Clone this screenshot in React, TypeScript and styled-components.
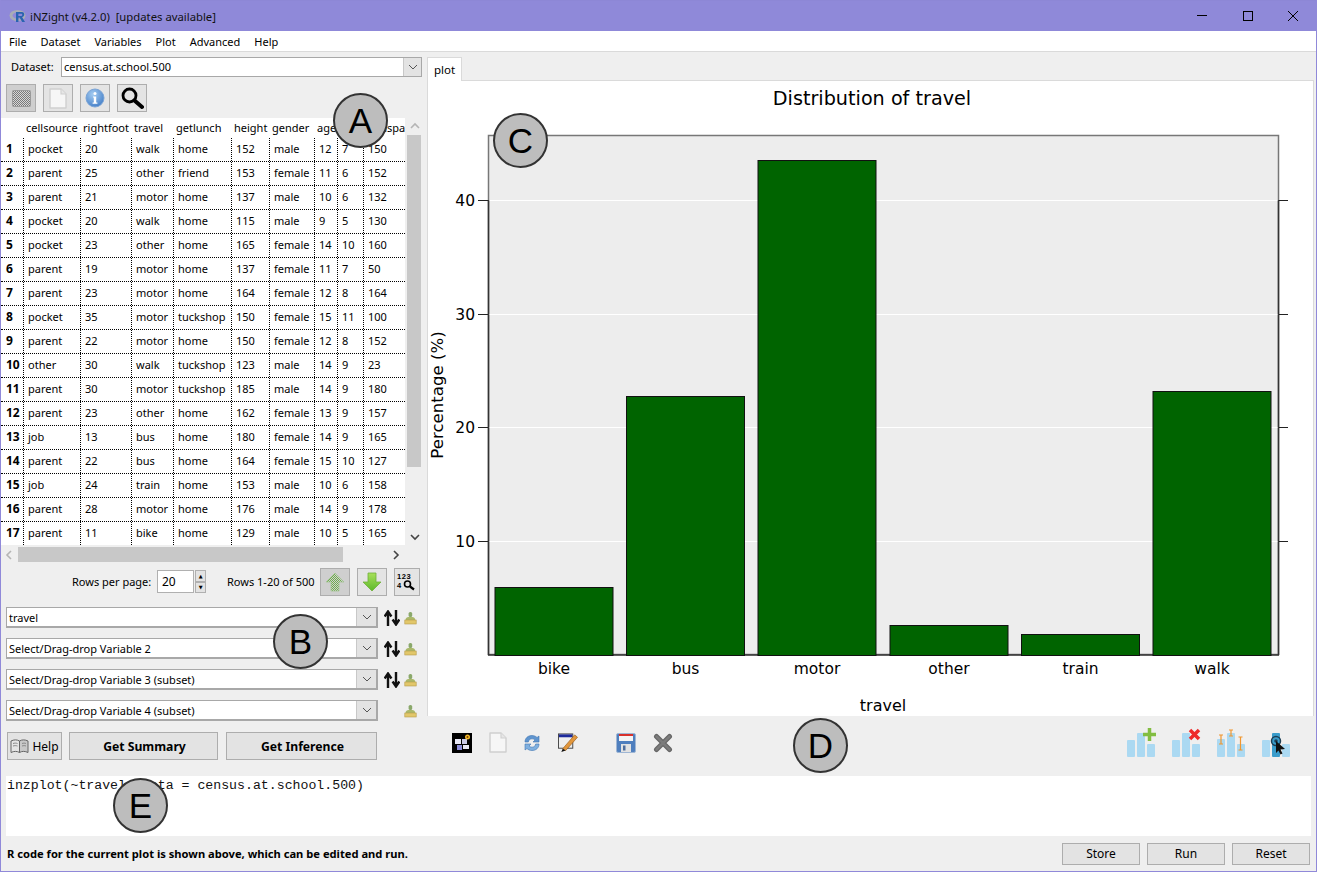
import React from 'react'
import styled, { createGlobalStyle } from 'styled-components'

const UI_FONT = `'Noto Sans', 'DejaVu Sans', sans-serif`

const GlobalStyle = createGlobalStyle`
    html, body {
        margin: 0;
        padding: 0;
        background: #efefef;
        overflow: hidden;
    }
    * {
        box-sizing: border-box;
    }
`

const COLUMNS = ['cellsource', 'rightfoot', 'travel', 'getlunch', 'height', 'gender', 'age', 'year', 'armspan']

const ROWS = [
    ['pocket', '20', 'walk', 'home', '152', 'male', '12', '7', '150'],
    ['parent', '25', 'other', 'friend', '153', 'female', '11', '6', '152'],
    ['parent', '21', 'motor', 'home', '137', 'male', '10', '6', '132'],
    ['pocket', '20', 'walk', 'home', '115', 'male', '9', '5', '130'],
    ['pocket', '23', 'other', 'home', '165', 'female', '14', '10', '160'],
    ['parent', '19', 'motor', 'home', '137', 'female', '11', '7', '50'],
    ['parent', '23', 'motor', 'home', '164', 'female', '12', '8', '164'],
    ['pocket', '35', 'motor', 'tuckshop', '150', 'female', '15', '11', '100'],
    ['parent', '22', 'motor', 'home', '150', 'female', '12', '8', '152'],
    ['other', '30', 'walk', 'tuckshop', '123', 'male', '14', '9', '23'],
    ['parent', '30', 'motor', 'tuckshop', '185', 'male', '14', '9', '180'],
    ['parent', '23', 'other', 'home', '162', 'female', '13', '9', '157'],
    ['job', '13', 'bus', 'home', '180', 'female', '14', '9', '165'],
    ['parent', '22', 'bus', 'home', '164', 'female', '15', '10', '127'],
    ['job', '24', 'train', 'home', '153', 'male', '10', '6', '158'],
    ['parent', '28', 'motor', 'home', '176', 'male', '14', '9', '178'],
    ['parent', '11', 'bike', 'home', '129', 'male', '10', '5', '165'],
]

const BARS = [
    { label: 'bike', x: 495, top: 587 },
    { label: 'bus', x: 626.5, top: 396 },
    { label: 'motor', x: 758, top: 160 },
    { label: 'other', x: 890, top: 625 },
    { label: 'train', x: 1021.5, top: 634 },
    { label: 'walk', x: 1153, top: 391 },
]

const TICKS = [
    { label: '40', y: 200 },
    { label: '30', y: 314 },
    { label: '20', y: 427 },
    { label: '10', y: 541 },
]

function Chevron({ dir }: { dir: 'up' | 'down' | 'left' | 'right' }): JSX.Element {
    const points = {
        up: '1,6 5,2 9,6',
        down: '1,3 5,7 9,3',
        left: '6,1 2,5 6,9',
        right: '3,1 7,5 3,9',
    }[dir]
    return (
        <svg width="10" height="10" viewBox="0 0 10 10">
            <polyline points={points} fill="none" stroke="currentColor" strokeWidth="1.6" />
        </svg>
    )
}

function DropArrow(): JSX.Element {
    return (
        <svg width="10" height="6" viewBox="0 0 10 6">
            <polyline points="1,1 5,5 9,1" fill="none" stroke="#555" strokeWidth="1" />
        </svg>
    )
}

function RLogo(): JSX.Element {
    return (
        <svg width="18" height="14" viewBox="0 0 18 14">
            <ellipse cx="8.5" cy="6.5" rx="8" ry="5.5" fill="#a9adb5" />
            <ellipse cx="9" cy="6.5" rx="5.5" ry="3.2" fill="#8f89d9" />
            <path d="M7 13V3h6c3 0 3 4.6 0 5l3 5h-2.8L10.6 8.5H9.4V13zM9.4 4.8v2.1h3c1.2 0 1.2-2.1 0-2.1z" fill="#2a64b0" />
        </svg>
    )
}

function SheetIcon(): JSX.Element {
    return (
        <svg width="18" height="21" viewBox="0 0 18 21">
            <path d="M1 1h11l5 5v14H1z" fill="#f6f6f6" stroke="#cfcfcf" strokeWidth="1.4" strokeLinejoin="round" />
            <path d="M12 1v5h5" fill="#e6e6e6" stroke="#cfcfcf" strokeWidth="1.1" />
        </svg>
    )
}

function CheckerIcon(): JSX.Element {
    return (
        <svg width="19" height="17" viewBox="0 0 19 17">
            <defs>
                <pattern id="chk" width="2" height="2" patternUnits="userSpaceOnUse">
                    <rect width="2" height="2" fill="#d6d6d6" />
                    <rect width="1" height="1" fill="#7a7a7a" />
                    <rect x="1" y="1" width="1" height="1" fill="#7a7a7a" />
                </pattern>
            </defs>
            <rect x="0.5" y="0.5" width="18" height="16" rx="1" fill="url(#chk)" stroke="#9a9a9a" />
        </svg>
    )
}

function InfoIcon(): JSX.Element {
    return (
        <svg width="20" height="20" viewBox="0 0 20 20">
            <defs>
                <radialGradient id="infoBlue" cx="0.4" cy="0.3" r="0.8">
                    <stop offset="0" stopColor="#a5cdf2" />
                    <stop offset="1" stopColor="#3c78c4" />
                </radialGradient>
            </defs>
            <circle cx="10" cy="10" r="9" fill="url(#infoBlue)" stroke="#7ba4d6" />
            <circle cx="10" cy="5.6" r="1.5" fill="#fff" />
            <path d="M8 8.4h3.2v6.2h1.2v1.2H7.6v-1.2h1.2v-5H8z" fill="#fff" />
        </svg>
    )
}

function SearchIcon(): JSX.Element {
    return (
        <svg width="24" height="24" viewBox="0 0 24 24">
            <circle cx="9.5" cy="9.5" r="6.5" fill="none" stroke="#000" strokeWidth="2.8" />
            <path d="M14.5 14.5L22 21" stroke="#000" strokeWidth="4" strokeLinecap="round" />
        </svg>
    )
}

function GreenArrow({ up, muted }: { up?: boolean; muted?: boolean }): JSX.Element {
    const id = up ? 'arrowUp' : 'arrowDown'
    return (
        <svg width="20" height="20" viewBox="0 0 20 20">
            <defs>
                <pattern id="arrowDots" width="2" height="2" patternUnits="userSpaceOnUse">
                    <rect width="2" height="2" fill="#6fae4c" />
                    <rect width="1" height="1" fill="#cfcfcf" />
                    <rect x="1" y="1" width="1" height="1" fill="#cfcfcf" />
                </pattern>
                <linearGradient id={id} x1="0" y1="0" x2="0" y2="1">
                    <stop offset="0" stopColor="#a8e05a" />
                    <stop offset="1" stopColor="#5cb82a" />
                </linearGradient>
            </defs>
            <path
                d={up ? 'M10 1L19 10H14V19H6V10H1z' : 'M6 1H14V10H19L10 19L1 10H6z'}
                fill={muted ? 'url(#arrowDots)' : `url(#${id})`}
                stroke={muted ? '#a5c596' : '#6fae3a'}
                strokeWidth="0.8"
            />
        </svg>
    )
}

function FindIcon(): JSX.Element {
    return (
        <svg width="22" height="22" viewBox="0 0 22 22">
            <text x="1" y="8" fontFamily="Liberation Sans" fontSize="7.5" fontWeight="700" letterSpacing="0.6">123</text>
            <text x="1" y="17" fontFamily="Liberation Sans" fontSize="7.5" fontWeight="700">4</text>
            <circle cx="11.5" cy="13" r="3" fill="none" stroke="#000" strokeWidth="1.6" />
            <path d="M14 15.5l4 3" stroke="#000" strokeWidth="2.2" />
        </svg>
    )
}

function SwitchIcon(): JSX.Element {
    return (
        <svg width="16" height="16" viewBox="0 0 16 16">
            <path d="M4 16V3M0.6 6.500L4 1.500l3.400 5" fill="none" stroke="#111" strokeWidth="2.400" />
            <path d="M12 0v13M8.600 9.500l3.400 5 3.400-5" fill="none" stroke="#111" strokeWidth="2.400" />
        </svg>
    )
}

function ClearIcon(): JSX.Element {
    return (
        <svg width="13" height="14" viewBox="0 0 13 14">
            <rect x="4.6" y="1" width="3.6" height="5" rx="1.6" fill="#8aa86a" />
            <path d="M1.5 9c0-2 1.6-3 3-3h3.8c1.4 0 3 1 3 3z" fill="#aab86a" />
            <rect x="0.8" y="9" width="11.4" height="4" fill="#e2c76a" stroke="#b59c4a" strokeWidth="0.6" />
        </svg>
    )
}

function BookIcon(): JSX.Element {
    return (
        <svg width="19" height="16" viewBox="0 0 19 16">
            <path d="M1 3c3-1.5 6-1.5 8.5 0v11.5C7 13 4 13 1 14.500z" fill="#e6e6e6" stroke="#666" />
            <path d="M18 3c-3-1.500-6-1.500-8.500 0v11.500c2.500-1.500 5.500-1.500 8.500 0z" fill="#c8c8c8" stroke="#666" />
            <path d="M3 5.500c1.600-.5 3-.5 4.500 0M3 8c1.600-.5 3-.5 4.500 0M12 5.500c1.500-.5 2.800-.5 4 0M12 8c1.500-.5 2.800-.5 4 0" stroke="#888" fill="none" />
        </svg>
    )
}

function ThemeIcon(): JSX.Element {
    return (
        <svg width="20" height="20" viewBox="0 0 20 20">
            <rect width="20" height="20" fill="#000" />
            <rect x="3" y="6" width="6" height="5" fill="#e6e6f4" />
            <rect x="10" y="6" width="5" height="5" fill="#c9c9e6" />
            <rect x="5" y="12" width="5" height="5" fill="#8c8cd8" />
            <rect x="11" y="12" width="6" height="4" fill="#e6e6f4" />
            <circle cx="15.500" cy="4" r="2.500" fill="#f0b92a" />
            <circle cx="15.500" cy="4" r="1" fill="#7a3b00" />
        </svg>
    )
}

function RefreshIcon(): JSX.Element {
    return (
        <svg width="18" height="18" viewBox="0 0 18 18">
            <path d="M2 8C2 4 5 1.500 9 1.500c2.500 0 4 1 5 2L16 2v6h-6l2-2c-.8-.7-1.800-1.200-3-1.200-2 0-3.400 1.300-3.700 3.200z" fill="#5f95cf" stroke="#3f75b2" strokeWidth="0.6" />
            <path d="M16 10c0 4-3 6.500-7 6.500-2.500 0-4-1-5-2L2 16v-6h6l-2 2c.8.700 1.800 1.200 3 1.200 2 0 3.400-1.300 3.700-3.200z" fill="#7fb0e0" stroke="#3f75b2" strokeWidth="0.6" />
        </svg>
    )
}

function EditIcon(): JSX.Element {
    return (
        <svg width="20" height="21" viewBox="0 0 21 21">
            <rect x="0.500" y="1.500" width="15" height="15" fill="#eee" stroke="#444" />
            <rect x="1" y="2" width="14" height="3" fill="#1d2a9c" />
            <path d="M5 17L17.500 2.500l3 2.500L8 19z" fill="#e2973c" stroke="#9a5c1a" strokeWidth="0.7" />
            <path d="M5 17l3 2-4.500 1.500z" fill="#111" />
        </svg>
    )
}

function SaveIcon(): JSX.Element {
    return (
        <svg width="20" height="20" viewBox="0 0 20 20">
            <rect x="0.500" y="0.500" width="19" height="19" rx="1.500" fill="#4f7fbe" stroke="#9fb6d4" />
            <rect x="3" y="1" width="14" height="7" fill="#f4f4f4" />
            <rect x="3" y="1" width="14" height="2" fill="#d8312c" />
            <rect x="5" y="11" width="10" height="8" fill="#e2e2e2" />
            <rect x="7" y="12.500" width="2.500" height="5" fill="#4f6f9e" />
        </svg>
    )
}

function CloseXIcon(): JSX.Element {
    return (
        <svg width="20" height="20" viewBox="0 0 20 20">
            <path d="M3.500 3.500L16.500 16.500M16.500 3.500L3.500 16.500" stroke="#666" strokeWidth="5" strokeLinecap="round" />
            <path d="M3.500 3.500L16.500 16.500M16.500 3.500L3.500 16.500" stroke="#7c7c7c" strokeWidth="2.500" strokeLinecap="round" />
        </svg>
    )
}

function BarsBase({ middle = '#abd9f2' }: { middle?: string }): JSX.Element {
    return (
        <>
            <rect x="1" y="12" width="8" height="17" rx="1" fill="#abd9f2" />
            <rect x="11" y="5" width="8" height="24" rx="1" fill={middle} />
            <rect x="21" y="16" width="8" height="13" rx="1" fill="#abd9f2" />
        </>
    )
}

function AddBarsIcon(): JSX.Element {
    return (
        <svg width="30" height="30" viewBox="0 0 30 30">
            <BarsBase />
            <path d="M23.500 0v13M17 6.500h13" stroke="#82bd41" strokeWidth="3.500" />
        </svg>
    )
}

function RemoveBarsIcon(): JSX.Element {
    return (
        <svg width="30" height="30" viewBox="0 0 30 30">
            <BarsBase />
            <path d="M19 2l9 9M28 2l-9 9" stroke="#ee2a2a" strokeWidth="3.500" />
        </svg>
    )
}

function ErrorBarsIcon(): JSX.Element {
    return (
        <svg width="30" height="30" viewBox="0 0 30 30">
            <rect x="1" y="11" width="8" height="18" rx="1" fill="#abd9f2" />
            <rect x="11" y="5" width="8" height="24" rx="1" fill="#abd9f2" />
            <rect x="21" y="16" width="8" height="13" rx="1" fill="#abd9f2" />
            <path d="M5 7v9M3 7h4M3 16h4M15 2v6M13 2h4M13 8h4M24.500 9v13M22.500 9h4M22.500 22h4" stroke="#f0962e" strokeWidth="1.200" fill="none" />
        </svg>
    )
}

function PickBarsIcon(): JSX.Element {
    return (
        <svg width="30" height="30" viewBox="0 0 30 30">
            <BarsBase middle="#3a9ccb" />
            <circle cx="15" cy="13" r="4.500" fill="none" stroke="#1d3f55" strokeWidth="1.500" />
            <circle cx="15" cy="13" r="1.800" fill="#1d3f55" />
            <path d="M15 13l9 8-4.500 .5 2 4-2 1-2-4-2.500 2.500z" fill="#111" />
        </svg>
    )
}

export default function App(): JSX.Element {
    return (
        <>
            <GlobalStyle />
            <Window>
                <TitleBar>
                    <RLogo />
                    <TitleText>iNZight (v4.2.0)&nbsp; [updates available]</TitleText>
                    <WindowControls>
                        <svg width="10" height="2" viewBox="0 0 10 2">
                            <rect width="10" height="1" fill="#000" />
                        </svg>
                        <svg width="10" height="10" viewBox="0 0 10 10">
                            <rect x="0.500" y="0.500" width="9" height="9" fill="none" stroke="#000" />
                        </svg>
                        <svg width="10" height="10" viewBox="0 0 10 10">
                            <path d="M0 0L10 10M10 0L0 10" stroke="#000" strokeWidth="1" />
                        </svg>
                    </WindowControls>
                </TitleBar>
                <MenuBar>
                    {['File', 'Dataset', 'Variables', 'Plot', 'Advanced', 'Help'].map((item) => (
                        <MenuItem key={item}>{item}</MenuItem>
                    ))}
                </MenuBar>
                <Workspace>
                    <LeftPanel>
                        <DatasetRow>
                            <DatasetLabel>Dataset:</DatasetLabel>
                            <Combo>
                                <ComboText>census.at.school.500</ComboText>
                                <ComboButton><DropArrow /></ComboButton>
                            </Combo>
                        </DatasetRow>
                        <ViewButtons>
                            <IconButton $active><CheckerIcon /></IconButton>
                            <IconButton><SheetIcon /></IconButton>
                            <IconButton><InfoIcon /></IconButton>
                            <IconButton><SearchIcon /></IconButton>
                        </ViewButtons>
                        <TableFrame>
                            <DataTable>
                                <HeaderRow>
                                    <HeaderCell />
                                    {COLUMNS.map((col) => (
                                        <HeaderCell key={col}>{col}</HeaderCell>
                                    ))}
                                </HeaderRow>
                                {ROWS.map((row, i) => (
                                    <DataRow key={i}>
                                        <RowNumber>{i + 1}</RowNumber>
                                        {row.map((value, j) => (
                                            <DataCell key={j}>{value}</DataCell>
                                        ))}
                                    </DataRow>
                                ))}
                            </DataTable>
                            <VScroll>
                                <ScrollArrow $muted><Chevron dir="up" /></ScrollArrow>
                                <VThumb />
                                <ScrollArrow><Chevron dir="down" /></ScrollArrow>
                            </VScroll>
                        </TableFrame>
                        <HScroll>
                            <ScrollArrow $muted><Chevron dir="left" /></ScrollArrow>
                            <HThumb />
                            <ScrollArrow><Chevron dir="right" /></ScrollArrow>
                        </HScroll>
                        <PagerRow>
                            <PagerLabel>Rows per page:</PagerLabel>
                            <Spinner>
                                <SpinnerValue>20</SpinnerValue>
                                <SpinnerButtons>
                                    <SpinnerButton>▲</SpinnerButton>
                                    <SpinnerButton>▼</SpinnerButton>
                                </SpinnerButtons>
                            </Spinner>
                            <PagerCount>Rows 1-20 of 500</PagerCount>
                            <PagerButton $active><GreenArrow up muted /></PagerButton>
                            <PagerButton><GreenArrow /></PagerButton>
                            <FindButton><FindIcon /></FindButton>
                        </PagerRow>
                        <VariableList>
                            {[
                                'travel',
                                'Select/Drag-drop Variable 2',
                                'Select/Drag-drop Variable 3 (subset)',
                                'Select/Drag-drop Variable 4 (subset)',
                            ].map((label, i) => (
                                <VariableRow key={label}>
                                    <VariableCombo>
                                        <ComboText>{label}</ComboText>
                                        <VariableComboButton><DropArrow /></VariableComboButton>
                                    </VariableCombo>
                                    <SwitchSlot>{i < 3 && <SwitchIcon />}</SwitchSlot>
                                    <ClearIcon />
                                </VariableRow>
                            ))}
                        </VariableList>
                        <ActionRow>
                            <HelpButton><BookIcon />Help</HelpButton>
                            <SummaryButton>Get Summary</SummaryButton>
                            <ActionButton>Get Inference</ActionButton>
                        </ActionRow>
                    </LeftPanel>
                    <RightPanel>
                        <TabStrip>
                            <Tab>plot</Tab>
                        </TabStrip>
                        <PlotFrame>
                            <svg width="885" height="635" viewBox="428 81 885 635">
                                <text x="872" y="105" textAnchor="middle" fontFamily="DejaVu Sans" fontSize="19.2">Distribution of travel</text>
                                <rect x="488.500" y="135.500" width="790" height="519" fill="#ededed" stroke="#777" strokeWidth="1.500" />
                                {TICKS.map((t) => (
                                    <g key={t.label}>
                                        <line x1="489" x2="1278" y1={t.y + 0.5} y2={t.y + 0.5} stroke="#fff" />
                                        <line x1="478" x2="488" y1={t.y + 0.5} y2={t.y + 0.5} stroke="#222" />
                                        <line x1="1279" x2="1288" y1={t.y + 0.5} y2={t.y + 0.5} stroke="#222" />
                                        <text x="475" y={t.y + 6} textAnchor="end" fontFamily="DejaVu Sans" fontSize="15.500">{t.label}</text>
                                    </g>
                                ))}
                                <line x1="488.500" x2="488.500" y1="200" y2="655" stroke="#333" strokeWidth="1.500" />
                                <line x1="1278.500" x2="1278.500" y1="200" y2="655" stroke="#333" strokeWidth="1.500" />
                                <line x1="488" x2="1279" y1="655" y2="655" stroke="#333" strokeWidth="1.500" />
                                {BARS.map((b) => (
                                    <g key={b.label}>
                                        <rect x={b.x} y={b.top + 0.5} width="118" height={655 - b.top} fill="#006400" stroke="#111" />
                                        <text x={b.x + 59} y="674" textAnchor="middle" fontFamily="DejaVu Sans" fontSize="15.500">{b.label}</text>
                                    </g>
                                ))}
                                <text x="883" y="711" textAnchor="middle" fontFamily="DejaVu Sans" fontSize="16">travel</text>
                                <text transform="translate(443 395) rotate(-90)" textAnchor="middle" fontFamily="DejaVu Sans" fontSize="16.600">Percentage (%)</text>
                            </svg>
                        </PlotFrame>
                        <PlotToolbar>
                            <PlotTools>
                                <ThemeIcon />
                                <SheetIcon />
                                <RefreshIcon />
                                <EditIcon />
                                <ToolSpacer />
                                <SaveIcon />
                                <CloseXIcon />
                            </PlotTools>
                            <AddonTools>
                                <AddBarsIcon />
                                <RemoveBarsIcon />
                                <ErrorBarsIcon />
                                <PickBarsIcon />
                            </AddonTools>
                        </PlotToolbar>
                    </RightPanel>
                </Workspace>
                <CodeBox>inzplot(~travel, data = census.at.school.500)</CodeBox>
                <StatusRow>
                    <StatusText>R code for the current plot is shown above, which can be edited and run.</StatusText>
                    <StatusButtons>
                        <StatusButton>Store</StatusButton>
                        <StatusButton>Run</StatusButton>
                        <StatusButton>Reset</StatusButton>
                    </StatusButtons>
                </StatusRow>
                <Badge $left={333} $top={93}>A</Badge>
                <Badge $left={273} $top={614}>B</Badge>
                <Badge $left={493} $top={113}>C</Badge>
                <Badge $left={793} $top={718}>D</Badge>
                <Badge $left={113} $top={778}>E</Badge>
            </Window>
        </>
    )
}

const Window = styled.div`
    position: relative;
    width: 1317px;
    height: 872px;
    display: flex;
    flex-direction: column;
    background: #efefef;
    border: 1px solid #9089d9;
    border-top: 0;
    font-family: ${UI_FONT};
    font-size: 11px;
    color: #000;
    overflow: hidden;
`

const TitleBar = styled.header`
    flex: none;
    height: 31px;
    margin: 0 -1px;
    padding-left: 9px;
    display: flex;
    align-items: center;
    background: #8f89d9;
    border-top: 1px solid #8d87d6;
`

const TitleText = styled.span`
    margin-left: 3px;
    font-size: 11.300px;
    color: #111;
`

const WindowControls = styled.div`
    margin-left: auto;
    width: 101px;
    margin-right: 19px;
    display: flex;
    align-items: center;
    justify-content: space-between;
`

const MenuBar = styled.nav`
    flex: none;
    height: 21px;
    display: flex;
    align-items: center;
    gap: 14px;
    padding-left: 8px;
    background: #fff;
    border-bottom: 1px solid #dadada;
`

const MenuItem = styled.span`
    font-size: 11px;
`

const Workspace = styled.div`
    flex: none;
    height: 724px;
    display: flex;
`

const LeftPanel = styled.aside`
    flex: none;
    width: 426px;
    display: flex;
    flex-direction: column;
`

const DatasetRow = styled.div`
    flex: none;
    height: 31px;
    padding: 5px 5px 0 10px;
    display: flex;
    align-items: flex-start;
`

const DatasetLabel = styled.label`
    width: 50px;
    line-height: 20px;
`

const Combo = styled.div`
    flex: 1;
    height: 20px;
    display: flex;
    background: #fff;
    border: 1px solid #a8a8a8;
`

const VariableCombo = styled(Combo)`
    flex: none;
    width: 372px;
    height: 21px;
    border-width: 1px 2px 2px 1px;
    span:first-child {
        line-height: 20px;
    }
`

const ComboText = styled.span`
    flex: 1;
    padding-left: 2px;
    line-height: 18px;
    white-space: nowrap;
    font-size: 11px;
`

const ComboButton = styled.span`
    flex: none;
    width: 18px;
    display: flex;
    align-items: center;
    justify-content: center;
    background: #e3e3e3;
    border-left: 1px solid #c8c8c8;
`

const VariableComboButton = styled(ComboButton)`
    width: 20px;
`

const ViewButtons = styled.div`
    flex: none;
    height: 35px;
    padding: 1px 0 0 5px;
    display: flex;
    align-items: flex-start;
    gap: 7px;
`

const IconButton = styled.span<{ $active?: boolean }>`
    width: 30px;
    height: 28px;
    display: flex;
    align-items: center;
    justify-content: center;
    background: ${(p) => (p.$active ? '#cfcfcf' : '#e4e4e4')};
    border: 1px solid #adadad;
`

const TableFrame = styled.div`
    flex: none;
    height: 427px;
    display: flex;
    overflow: hidden;
`

const DataTable = styled.div`
    flex: none;
    width: 404px;
    height: 427px;
    background: #fff;
    overflow: hidden;
`

const gridColumns = '23px 57px 51px 42px 58px 38px 45px 23px 26px 41px'

const HeaderRow = styled.div`
    display: grid;
    grid-template-columns: ${gridColumns};
    height: 20px;
`

const HeaderCell = styled.span`
    padding-left: 2px;
    line-height: 20px;
    white-space: nowrap;
    overflow: hidden;
`

const DataRow = styled.div`
    display: grid;
    grid-template-columns: ${gridColumns};
    height: 24px;
    border-bottom: 1px dotted #000;
`

const RowNumber = styled.span`
    padding-left: 5px;
    line-height: 22px;
    font-weight: 700;
    font-size: 12px;
    border-right: 1px dotted #000;
`

const DataCell = styled.span`
    padding-left: 4px;
    line-height: 22px;
    white-space: nowrap;
    overflow: hidden;
    border-right: 1px dotted #000;
    &:last-child {
        border-right: 0;
    }
`

const VScroll = styled.div`
    flex: none;
    width: 16px;
    margin-left: 1px;
    height: 427px;
    display: flex;
    flex-direction: column;
`

const ScrollArrow = styled.span<{ $muted?: boolean }>`
    flex: none;
    width: 17px;
    height: 17px;
    display: flex;
    align-items: center;
    justify-content: center;
    color: ${(p) => (p.$muted ? '#b5b5b5' : '#444')};
`

const VThumb = styled.div`
    flex: none;
    width: 14px;
    height: 332px;
    margin: 0 auto 61px;
    background: #c8c8c8;
`

const HScroll = styled.div`
    flex: none;
    width: 403px;
    height: 15px;
    margin-top: 2px;
    display: flex;
    align-items: center;
    justify-content: space-between;
`

const HThumb = styled.div`
    flex: none;
    width: 325px;
    height: 15px;
    margin-right: 44px;
    background: #c8c8c8;
`

const PagerRow = styled.div`
    flex: none;
    height: 45px;
    padding: 6px 0 0 71px;
    display: flex;
    align-items: flex-start;
`

const PagerLabel = styled.span`
    width: 85px;
    line-height: 28px;
`

const Spinner = styled.div`
    flex: none;
    width: 49px;
    height: 23px;
    margin-top: 2px;
    display: flex;
`

const SpinnerValue = styled.span`
    width: 38px;
    padding-left: 4px;
    line-height: 21px;
    font-size: 12px;
    background: #fff;
    border: 1px solid #b0b0b0;
`

const SpinnerButtons = styled.div`
    width: 11px;
    margin-left: 1px;
    display: flex;
    flex-direction: column;
`

const SpinnerButton = styled.span`
    flex: 1;
    display: flex;
    align-items: center;
    justify-content: center;
    font-size: 5px;
    background: #e3e3e3;
    border: 1px solid #b0b0b0;
`

const PagerCount = styled.span`
    width: 93px;
    margin-left: 21px;
    line-height: 28px;
    white-space: nowrap;
`

const PagerButton = styled(IconButton)`
    margin-right: 7px;
    height: 28px;
`

const FindButton = styled(IconButton)`
    width: 26px;
`

const VariableList = styled.div`
    flex: none;
    display: flex;
    flex-direction: column;
    gap: 10px;
    padding-left: 5px;
`

const VariableRow = styled.div`
    display: flex;
    align-items: center;
    height: 21px;
`

const SwitchSlot = styled.span`
    flex: none;
    width: 26px;
    padding-left: 1px;
    display: flex;
    justify-content: center;
`

const ActionRow = styled.div`
    flex: none;
    margin-top: 11px;
    padding-left: 6px;
    display: flex;
    gap: 8px;
`

const ActionButton = styled.span`
    flex: none;
    width: 151px;
    height: 28px;
    padding-left: 2px;
    display: flex;
    align-items: center;
    justify-content: center;
    font-weight: 700;
    font-size: 12.200px;
    background: #e3e3e3;
    border: 1px solid #adadad;
`

const SummaryButton = styled(ActionButton)`
    width: 149px;
`

const HelpButton = styled(ActionButton)`
    width: 55px;
    margin-right: -1px;
    padding-left: 0;
    gap: 3px;
    font-weight: 400;
    font-size: 12px;
`

const RightPanel = styled.main`
    flex: 1;
    min-width: 0;
    display: flex;
    flex-direction: column;
    padding-right: 2px;
`

const TabStrip = styled.div`
    flex: none;
    height: 28px;
    display: flex;
    align-items: flex-end;
`

const Tab = styled.span`
    width: 35px;
    height: 24px;
    padding-left: 6px;
    line-height: 24px;
    font-size: 11.500px;
    background: #fff;
    border: 1px solid #dadada;
    border-bottom: 0;
    margin-bottom: -1px;
    position: relative;
`

const PlotFrame = styled.div`
    flex: none;
    height: 636px;
    background: #fff;
    border-top: 1px solid #dadada;
    border-left: 1px solid #dadada;
    border-right: 1px solid #dadada;
    overflow: hidden;
    svg {
        display: block;
    }
`

const PlotToolbar = styled.div`
    flex: 1;
    display: flex;
    align-items: flex-start;
    justify-content: space-between;
`

const PlotTools = styled.div`
    margin: 16px 0 0 25px;
    display: flex;
    align-items: center;
    gap: 16.500px;
`

const ToolSpacer = styled.span`
    width: 5.500px;
`

const AddonTools = styled.div`
    margin: 12px 23px 0 0;
    display: flex;
    gap: 15px;
`

const CodeBox = styled.pre`
    flex: none;
    height: 60px;
    margin: 0 5px;
    padding: 2px 1px;
    background: #fff;
    font-family: 'Liberation Mono', monospace;
    font-size: 13.230px;
    line-height: 15px;
    color: #111;
`

const StatusRow = styled.div`
    flex: 1;
    display: flex;
    align-items: center;
    justify-content: space-between;
    padding: 0 6px;
`

const StatusText = styled.span`
    font-weight: 700;
    font-size: 11.170px;
`

const StatusButtons = styled.div`
    display: flex;
    gap: 7px;
`

const StatusButton = styled.span`
    width: 78px;
    height: 22px;
    display: flex;
    align-items: center;
    justify-content: center;
    font-size: 12px;
    background: #e3e3e3;
    border: 1px solid #adadad;
`

const Badge = styled.div<{ $left: number; $top: number }>`
    position: absolute;
    left: ${(p) => p.$left - 1}px;
    top: ${(p) => p.$top}px;
    width: 55px;
    height: 55px;
    display: flex;
    align-items: center;
    justify-content: center;
    border-radius: 50%;
    background: #bdbdbd;
    border: 2px solid #333;
    font-family: 'Liberation Sans', sans-serif;
    font-size: 35px;
    color: #000;
`
